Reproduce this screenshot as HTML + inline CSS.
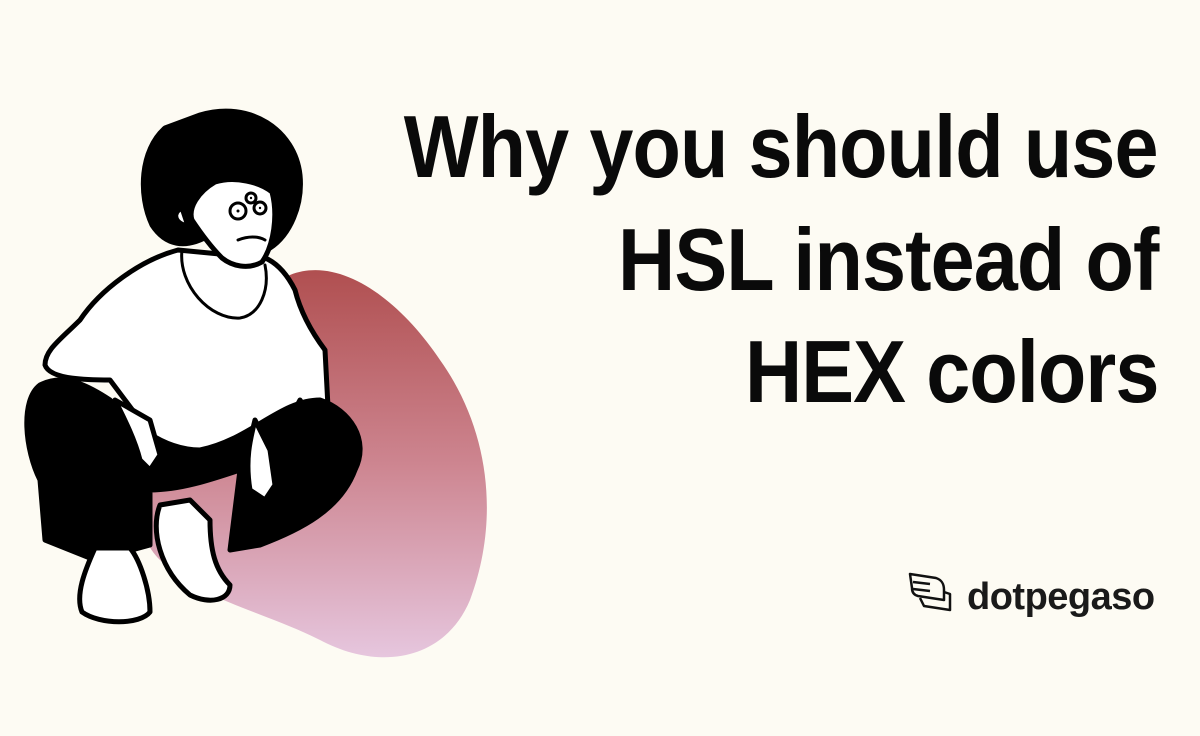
<!DOCTYPE html>
<html><head><meta charset="utf-8"><style>
html,body{margin:0;padding:0}
body{width:1200px;height:736px;background:#fdfbf3;position:relative;overflow:hidden;font-family:"Liberation Sans",sans-serif}
.t{position:absolute;right:42px;font-weight:bold;font-size:88px;color:#0a0a0a;letter-spacing:-1px;white-space:nowrap;line-height:1;transform:scaleX(0.9);transform-origin:right top}
.logo{position:absolute;left:967px;top:576px;font-size:38px;font-weight:bold;color:#1a1a1a;letter-spacing:-0.5px}
</style></head><body>
<svg width="1200" height="736" style="position:absolute;left:0;top:0">
<defs><linearGradient id="g" x1="0" y1="0" x2="0" y2="1"><stop offset="0" stop-color="#b04f50"/><stop offset="0.5" stop-color="#cd8590"/><stop offset="1" stop-color="#e6c6de"/></linearGradient></defs>
<path d="M290 275 C340 255 400 300 440 360 C490 430 500 520 470 600 C445 660 380 672 320 640 C260 610 200 600 160 560 C120 520 150 460 200 420 C240 380 240 300 290 275Z" fill="url(#g)"/>
<g stroke="#000" stroke-width="5" stroke-linejoin="round" stroke-linecap="round">
<path d="M178 250 C140 260 100 290 80 320 C60 340 45 350 45 365 C50 380 90 380 110 380 L140 420 C150 450 170 460 240 450 C270 440 290 420 300 400 L330 445 L325 350 C310 330 300 310 295 290 C280 260 260 250 230 255 Z" fill="#fff"/>
<path d="M40 385 C20 400 25 450 40 480 L45 540 L95 560 L150 545 L150 490 C180 490 210 480 240 470 L230 550 L260 545 C300 530 340 510 355 470 C370 440 350 410 320 400 C280 400 250 440 200 450 C160 450 130 420 110 400 C80 380 60 375 40 385Z" fill="#000"/>
<path d="M115 400 C125 420 135 440 140 460 L150 470 L160 455 L150 420 Z" fill="#fff"/>
<path d="M255 420 C250 440 245 460 250 490 L265 500 L275 485 L270 450 Z" fill="#fff"/>
<path d="M95 548 C85 570 75 595 82 612 C100 625 140 625 150 612 C150 590 140 560 130 548 Z" fill="#fff"/>
<path d="M160 505 C150 530 160 570 190 595 C210 605 230 600 230 585 C215 570 210 550 210 520 L190 500 Z" fill="#fff"/>
<path d="M200 115 C250 100 295 130 300 175 C303 205 290 235 270 248 C250 255 225 245 210 235 C185 250 165 245 152 225 C138 195 140 150 165 128 Z" fill="#000"/>
<path d="M215 182 C235 176 260 182 272 192 C278 215 274 245 262 262 C248 270 232 266 222 258 C212 248 202 235 192 220 C188 208 198 192 215 182Z" fill="#fff"/>
<path d="M182 208 C172 212 174 224 188 226 Z" fill="#fff"/>
<path d="M182 250 C178 285 210 320 240 318 C260 315 270 290 265 265" fill="none" stroke-width="3"/>
<circle cx="238" cy="211" r="8" fill="#fff" stroke-width="3"/><circle cx="260" cy="208" r="6" fill="#fff" stroke-width="3"/><circle cx="251" cy="198" r="5" fill="#fff" stroke-width="3"/>
<circle cx="238" cy="211" r="1.5" fill="#000" stroke="none"/><circle cx="260" cy="208" r="1.2" fill="#000" stroke="none"/><circle cx="251" cy="198" r="1.2" fill="#000" stroke="none"/>
<path d="M238 240 C248 236 258 236 265 240" fill="none" stroke-width="3"/>
</g>
</svg>
<div class="t" style="top:103px">Why you should use</div>
<div class="t" style="top:216px">HSL instead of</div>
<div class="t" style="top:328px">HEX colors</div>
<svg width="50" height="50" style="position:absolute;left:906px;top:570px" fill="none" stroke="#111" stroke-width="2.5" stroke-linejoin="round">
<path d="M4 4 L30 8 C36 10 38 14 38 20 L38 30 L12 26 C8 25 6 22 6 18 Z"/>
<path d="M38 22 L44 24 L44 40 L18 36 L14 28"/>
<path d="M7 12 L24 14 M7 19 L24 21"/>
</svg>
<div class="logo">dotpegaso</div>
</body></html>
